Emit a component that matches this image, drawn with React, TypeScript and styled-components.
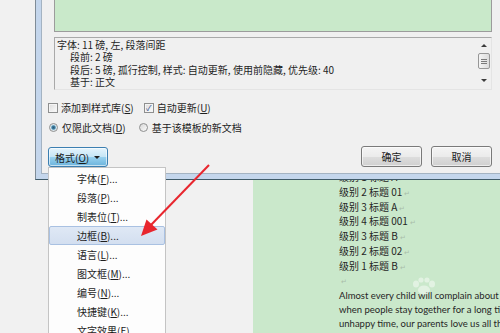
import React from 'react';
import styled, { createGlobalStyle } from 'styled-components';

const GlobalStyle = createGlobalStyle`
  html, body { margin: 0; padding: 0; background: #f4f4f4; }
  body { font-family: "Noto Sans CJK SC", "Noto Sans", sans-serif; }
`;

const Screen = styled.div`
  position: relative;
  width: 500px;
  height: 333px;
  overflow: hidden;
  background: #f4f4f4;
  font-family: "Noto Sans CJK SC", "Noto Sans", sans-serif;
  font-size: 10px;
  color: #1e1e1e;
`;

/* ---------- Word document behind ---------- */
const Workspace = styled.div`
  display: flex;
  height: 100%;
`;
const Gutter = styled.div`
  width: 253px;
  flex: none;
  background: #f1f1f1;
`;
const Page = styled.div`
  flex: 1;
  background: #cae8cb;
  padding: 170px 0 0 86px;
  color: #262626;
`;
const HeadingLine = styled.div`
  height: 14.75px;
  line-height: 14.75px;
  font-size: 10px;
  white-space: nowrap;
`;
const Mark = styled.span`
  color: #a9bca9;
  font-size: 7px;
  margin-left: 2px;
`;
const BlankLine = styled.div`
  height: 14px;
  line-height: 14px;
`;
const Para = styled.div<{ $first?: boolean }>`
  margin-top: ${(p) => (p.$first ? '2px' : '0')};
  font-family: Lato, "Liberation Sans", sans-serif;
  font-size: 9.5px;
  line-height: 14px;
  height: 14px;
  white-space: nowrap;
`;

/* ---------- Dialog ---------- */
const Dialog = styled.div`
  position: absolute;
  left: 35px;
  top: 0;
  width: 480px;
  background: #c4d6ec;
  border-left: 1px solid #7f8c97;
  border-bottom: 1px solid #3f5a68;
  padding: 0 0 5px 5px;
`;
const DialogBody = styled.div`
  background: #f0f0f0;
  border-left: 1px solid #a4b3c2;
  border-bottom: 1px solid #a4b3c2;
  padding: 0 0 6px 6px;
  display: flex;
  flex-direction: column;
`;
const Preview = styled.div`
  box-sizing: border-box;
  margin-left: 6px;
  width: 438px;
  height: 32px;
  background: #c9e9ca;
  border: 1px solid #9c9c9c;
  border-top: none;
`;
const Description = styled.div`
  box-sizing: border-box;
  margin: 5px 0 0 6px;
  width: 438px;
  height: 53px;
  border: 1px solid;
  border-color: #a9a9a9 #e4e4e4 #e4e4e4 #a9a9a9;
  display: flex;
`;
const DescText = styled.div`
  flex: 1;
  padding: 1px 0 0 2px;
  line-height: 12.3px;
  white-space: nowrap;
`;
const DescLine = styled.div<{ $indent?: boolean }>`
  height: 12.3px;
  padding-left: ${(p) => (p.$indent ? '13px' : '0')};
`;
const ScrollTrack = styled.div`
  width: 13px;
  margin-right: 1px;
  display: flex;
  flex-direction: column;
  align-items: center;
  padding-top: 6px;
`;
const Arrow = styled.div<{ $down?: boolean }>`
  width: 0;
  height: 0;
  border-left: 3px solid transparent;
  border-right: 3px solid transparent;
  ${(p) =>
    p.$down
      ? 'border-top: 3px solid #3c3c3c; margin-top: 10px;'
      : 'border-bottom: 3px solid #3c3c3c;'}
`;
const Thumb = styled.div`
  box-sizing: border-box;
  margin-top: 6px;
  width: 12px;
  height: 16px;
  border: 1px solid #979797;
  border-radius: 2px;
  background: linear-gradient(to right, #f4f4f4, #dcdcdc);
  display: flex;
  flex-direction: column;
  align-items: center;
  justify-content: center;
  gap: 1px;
`;
const Grip = styled.div`
  width: 6px;
  height: 1px;
  background: #7a7a7a;
`;

const OptionRow = styled.div<{ $gap: number; $top: number; $h: number }>`
  display: flex;
  align-items: center;
  margin-top: ${(p) => p.$top}px;
  height: ${(p) => p.$h}px;
  gap: ${(p) => p.$gap}px;
  white-space: nowrap;
`;
const Option = styled.label`
  display: flex;
  align-items: center;
  gap: 3px;
  color: #1e1e1e;
`;
const CheckBox = styled.span<{ $checked?: boolean }>`
  box-sizing: border-box;
  width: 10px;
  height: 10px;
  border: 1px solid #8e8f8f;
  background: linear-gradient(135deg, #dcdcdc, #fbfbfb);
  box-shadow: inset 0 0 0 1px #f4f4f4;
  display: flex;
  align-items: center;
  justify-content: center;
  font-size: 8px;
  line-height: 1;
  color: #2a4a8a;
`;
const Radio = styled.span<{ $checked?: boolean }>`
  box-sizing: border-box;
  width: 9px;
  height: 9px;
  border-radius: 50%;
  border: 1px solid #8e8f8f;
  background: ${(p) =>
    p.$checked
      ? 'radial-gradient(circle, #2d5a7a 0, #3d7ea0 1.6px, #c0dcea 2.6px, #f2f2f2 3.4px)'
      : 'linear-gradient(135deg, #d8d8d8, #fbfbfb)'};
  margin: 0 1px;
`;

const ButtonRow = styled.div`
  margin-top: 12px;
  width: 444px;
  height: 21px;
  display: flex;
  align-items: flex-start;
  justify-content: space-between;
`;
const ButtonGroup = styled.div`
  display: flex;
  gap: 9px;
`;
const Button = styled.div<{ $active?: boolean }>`
  box-sizing: border-box;
  height: ${(p) => (p.$active ? '20px' : '21px')};
  margin-top: ${(p) => (p.$active ? '1px' : '0')};
  width: ${(p) => (p.$active ? '60px' : '61px')};
  border: 1px solid ${(p) => (p.$active ? '#3c7fb1' : '#7a7a7a')};
  border-radius: 3px;
  background: ${(p) =>
    p.$active
      ? 'linear-gradient(#e5f4fc 0%, #c4e5f6 50%, #98d1ef 51%, #6cb4dc 100%)'
      : 'linear-gradient(#f4f4f4 0%, #ebebeb 50%, #dddddd 51%, #cfcfcf 100%)'};
  box-shadow: inset 0 0 0 1px rgba(255, 255, 255, 0.6);
  display: flex;
  align-items: center;
  justify-content: ${(p) => (p.$active ? 'flex-start' : 'center')};
  padding-left: ${(p) => (p.$active ? '6px' : '0')};
  gap: 5px;
  color: #1a1a1a;
  white-space: nowrap;
`;
const Caret = styled.span`
  width: 0;
  height: 0;
  border-left: 3px solid transparent;
  border-right: 3px solid transparent;
  border-top: 3px solid #1e1e1e;
`;

/* ---------- Dropdown menu ---------- */
const Menu = styled.div`
  position: absolute;
  left: 48px;
  top: 167px;
  width: 118px;
  height: 180px;
  box-sizing: border-box;
  background: #fdfdfd;
  border: 1px solid #c4c4c4;
  padding-top: 1px;
`;
const MenuItem = styled.div<{ $hot?: boolean }>`
  box-sizing: border-box;
  height: 19px;
  line-height: 17px;
  padding-left: 27px;
  white-space: nowrap;
  color: #1e1e1e;
  border: 1px solid ${(p) => (p.$hot ? '#a9c1e2' : 'transparent')};
  border-radius: 2px;
  background: ${(p) => (p.$hot ? 'linear-gradient(#dfe8f5, #d3dff0)' : 'transparent')};
`;

/* ---------- Overlays ---------- */
const Overlay = styled.svg`
  position: absolute;
  left: 0;
  top: 0;
  pointer-events: none;
`;

const menuItems: [string, string][] = [
  ['字体', 'F'],
  ['段落', 'P'],
  ['制表位', 'T'],
  ['边框', 'B'],
  ['语言', 'L'],
  ['图文框', 'M'],
  ['编号', 'N'],
  ['快捷键', 'K'],
  ['文字效果', 'E'],
];

const headings = [
  '级别 1 标题 A',
  '级别 2 标题 01',
  '级别 3 标题 A',
  '级别 4 标题 001',
  '级别 3 标题 B',
  '级别 2 标题 02',
  '级别 1 标题 B',
];

export default function App() {
  return (
    <Screen>
      <GlobalStyle />
      <Workspace>
        <Gutter />
        <Page>
          {headings.map((h) => (
            <HeadingLine key={h}>
              {h}
              <Mark>↵</Mark>
            </HeadingLine>
          ))}
          <BlankLine>
            <Mark>↵</Mark>
          </BlankLine>
          <Para $first>Almost every child will complain about their parents sometimes.</Para>
          <Para>when people stay together for a long time, they will</Para>
          <Para>unhappy time, our parents love us all the time.</Para>
        </Page>
      </Workspace>

      <Dialog>
        <DialogBody>
          <Preview />
          <Description>
            <DescText>
              <DescLine>字体: 11 磅, 左, 段落间距</DescLine>
              <DescLine $indent>段前: 2 磅</DescLine>
              <DescLine $indent>段后: 5 磅, 孤行控制, 样式: 自动更新, 使用前隐藏, 优先级: 40</DescLine>
              <DescLine $indent>基于: 正文</DescLine>
            </DescText>
            <ScrollTrack>
              <Arrow />
              <Thumb>
                <Grip />
                <Grip />
                <Grip />
              </Thumb>
              <Arrow $down />
            </ScrollTrack>
          </Description>

          <OptionRow $gap={10} $top={10} $h={15}>
            <Option>
              <CheckBox />
              <span>
                添加到样式库(<u>S</u>)
              </span>
            </Option>
            <Option>
              <CheckBox $checked>✓</CheckBox>
              <span>
                自动更新(<u>U</u>)
              </span>
            </Option>
          </OptionRow>
          <OptionRow $gap={12} $top={5} $h={14}>
            <Option>
              <Radio $checked />
              <span>
                仅限此文档(<u>D</u>)
              </span>
            </Option>
            <Option>
              <Radio />
              <span>基于该模板的新文档</span>
            </Option>
          </OptionRow>

          <ButtonRow>
            <Button $active>
              <span>
                格式(<u>O</u>)
              </span>
              <Caret />
            </Button>
            <ButtonGroup>
              <Button>确定</Button>
              <Button>取消</Button>
            </ButtonGroup>
          </ButtonRow>
        </DialogBody>
      </Dialog>

      <Menu>
        {menuItems.map(([label, key]) => (
          <MenuItem key={label} $hot={key === 'B'}>
            {label}(<u>{key}</u>)...
          </MenuItem>
        ))}
      </Menu>

      <Overlay width="500" height="333" viewBox="0 0 500 333">
        <g fill="rgba(255,255,255,0.45)">
          <ellipse cx="416" cy="284" rx="3" ry="3.5" />
          <ellipse cx="421" cy="280" rx="2.6" ry="2.6" />
          <ellipse cx="427" cy="280" rx="2.6" ry="2.6" />
          <ellipse cx="432" cy="284" rx="3" ry="3.5" />
          <ellipse cx="424" cy="290" rx="6" ry="4.5" />
        </g>
        <line x1="209" y1="165" x2="150" y2="226" stroke="#e8262e" strokeWidth="2" />
        <polygon points="141,236 146.5,219.5 157.5,229.5" fill="#e8262e" />
      </Overlay>
    </Screen>
  );
}
